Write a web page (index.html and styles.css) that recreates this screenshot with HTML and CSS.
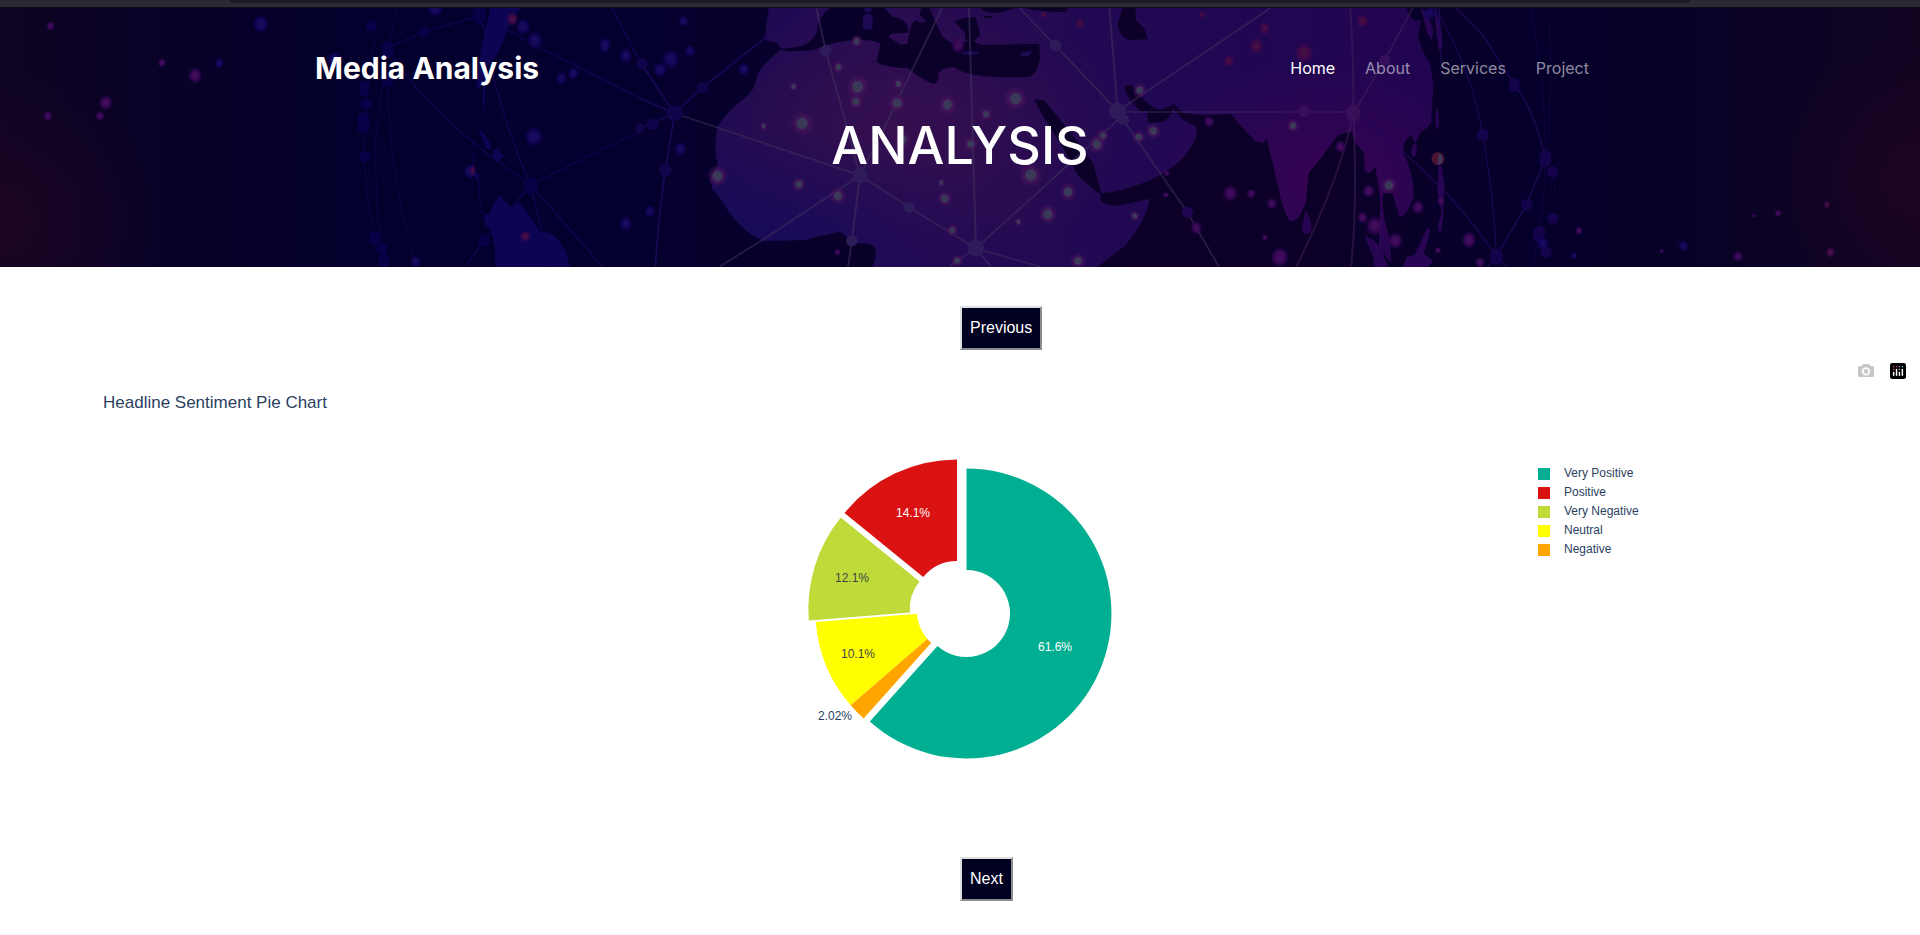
FILE: index.html
```html
<!DOCTYPE html>
<html lang="en">
<head>
<meta charset="utf-8">
<title>Media Analysis</title>
<link rel="stylesheet" href="styles.css">
</head>
<body>
<div class="topstrip"><div class="topstrip-field"></div></div>
<header class="hero">
  <svg class="hero-art" viewBox="0 8 1920 259" preserveAspectRatio="xMidYMid slice" aria-hidden="true">
    <defs>
      <linearGradient id="sky" x1="0" x2="1" y1="0" y2="0">
        <stop offset="0" stop-color="#0e0422"/><stop offset=".16" stop-color="#04002c"/><stop offset=".3" stop-color="#03002f"/>
        <stop offset=".5" stop-color="#0b0028"/><stop offset=".68" stop-color="#0d0028"/><stop offset=".8" stop-color="#04002b"/><stop offset="1" stop-color="#100421"/>
      </linearGradient>
      <linearGradient id="landfill" gradientUnits="userSpaceOnUse" x1="700" x2="1450" y1="0" y2="0">
        <stop offset="0" stop-color="#190a53"/><stop offset=".25" stop-color="#260b51"/><stop offset=".6" stop-color="#200853"/><stop offset="1" stop-color="#220450"/>
      </linearGradient>
      <radialGradient id="warm"><stop offset="0" stop-color="#38104e" stop-opacity=".85"/><stop offset="1" stop-color="#38104e" stop-opacity="0"/></radialGradient>
      <radialGradient id="cool"><stop offset="0" stop-color="#150a5c" stop-opacity=".7"/><stop offset="1" stop-color="#150a5c" stop-opacity="0"/></radialGradient>
      <radialGradient id="magenta"><stop offset="0" stop-color="#3a0353" stop-opacity=".85"/><stop offset="1" stop-color="#3a0353" stop-opacity="0"/></radialGradient>
      <radialGradient id="wine"><stop offset="0" stop-color="#200524" stop-opacity=".8"/><stop offset="1" stop-color="#200524" stop-opacity="0"/></radialGradient>
      <radialGradient id="g"><stop offset="0" stop-color="#3a3a58"/><stop offset=".4" stop-color="#3a3858"/><stop offset=".52" stop-color="#46145a" stop-opacity=".8"/><stop offset="1" stop-color="#46145a" stop-opacity="0"/></radialGradient>
      <radialGradient id="b"><stop offset="0" stop-color="#1c0a5e"/><stop offset=".45" stop-color="#16085a"/><stop offset="1" stop-color="#10016c" stop-opacity="0"/></radialGradient>
      <radialGradient id="p"><stop offset="0" stop-color="#431060"/><stop offset=".45" stop-color="#3b0856"/><stop offset="1" stop-color="#340460" stop-opacity="0"/></radialGradient>
      <radialGradient id="r"><stop offset="0" stop-color="#461540"/><stop offset=".45" stop-color="#400848"/><stop offset="1" stop-color="#400848" stop-opacity="0"/></radialGradient>
      <clipPath id="landclip">
        <path transform="translate(640) scale(.4082 .3333)" d="M316 20L306 110Q308 126 326 124Q340 132 345 146L368 144Q410 138 422 118Q436 100 434 85Q436 50 470 20ZM345 150Q375 158 425 150Q480 122 530 120Q575 118 589 132L579 186Q600 202 655 205Q680 230 717 252Q734 250 731 220Q745 200 770 202Q795 224 840 228Q900 234 950 232Q975 225 980 170L978 132L850 134Q830 140 815 118Q800 124 785 130Q770 142 740 108Q725 70 708 20L690 20L684 45L702 65Q685 72 678 60Q662 66 660 100L655 130L640 134L610 112L614 102L658 98Q660 60 620 50L596 20L830 20Q845 42 880 38L930 20Q980 38 1045 36L1050 20L1184 20L1170 70Q1175 120 1205 120L1245 118L1235 85L1215 60L1214 20L1568 20L1568 580L1535 415Q1528 440 1505 420L1470 375L1448 342L1380 346L1330 338L1308 313L1275 330Q1240 320 1215 265Q1200 248 1187 260Q1190 295 1228 335L1240 332L1246 368L1280 366Q1305 350 1305 322Q1325 365 1360 378Q1370 400 1355 430Q1320 510 1230 550Q1180 575 1130 580L1110 490L1050 390L990 300L966 298Q980 340 1030 430L1075 530L1128 584L1128 602Q1145 622 1180 616L1248 596Q1245 650 1190 735L1120 802L570 802Q590 740 560 730L530 730L490 695Q440 706 405 720L302 722Q240 690 200 600L178 570L172 540L190 495Q180 440 190 380Q215 330 260 292Q280 270 285 240Q290 200 345 150Z"/>
        <path transform="translate(1280) scale(.4082 .3333)" d="M-1 20L310 20Q312 50 330 60L345 62L338 110Q350 160 367 190L376 250L370 370Q362 385 345 395L332 430L320 405Q302 420 301 455Q330 530 327 590Q315 640 293 652Q285 615 275 580L253 580Q248 620 258 670Q272 720 272 790L242 740L246 600L234 500Q215 530 207 510L206 460L184 425L176 395Q142 400 135 415Q105 470 70 520L64 600Q48 665 28 664Q15 660 0 584Z"/>
      </clipPath>
    </defs>
    <rect y="8" width="1920" height="259" fill="url(#sky)"/>
    <ellipse cx="0" cy="220" rx="160" ry="150" fill="url(#wine)"/>
    <ellipse cx="1920" cy="180" rx="160" ry="150" fill="url(#wine)"/>
    <g clip-path="url(#landclip)">
      <rect y="8" width="1920" height="259" fill="url(#landfill)"/>
      <ellipse cx="900" cy="130" rx="230" ry="140" fill="url(#warm)"/>
      <ellipse cx="1320" cy="180" rx="180" ry="120" fill="url(#magenta)"/>
      <ellipse cx="790" cy="240" rx="220" ry="110" fill="url(#cool)"/>
    </g>

    <g transform="scale(.4082 .3333)">
      <path fill="#0d0454" d="M1202 20L1278 20Q1245 70 1234 120Q1215 180 1195 190Q1190 260 1185 342Q1178 300 1186 250L1166 270L1178 150ZM1170 380L1195 415L1205 446L1190 445ZM1205 460L1218 443L1236 468L1215 488ZM1162 412L1156 520L1170 540L1176 610L1190 675L1202 690L1212 740L1213 802L1396 802Q1380 710 1340 696L1325 698L1275 610L1250 620L1222 585L1196 645L1180 640L1172 520L1160 515Z"/>
      <g fill="none" stroke="#0e054e" stroke-width="4">
        <path d="M1498 20L1568 185M1172 48L1039 96L950 142Q1040 340 1300 555L1568 393M1195 62L1568 295M1182 70Q1220 340 1300 555L1350 802M1300 555L1478 802M1300 555L1186 722L1140 802"/>
        <path stroke-width="2" d="M975 20L950 145Q930 300 920 420Q920 640 935 740M950 250Q955 550 1018 785M920 120Q895 250 893 470Q895 600 920 714"/>
      </g>
      <g fill="#090148"><ellipse cx="910" cy="78" rx="14" ry="17"/><ellipse cx="1039" cy="96" rx="14" ry="17"/><ellipse cx="1174" cy="45" rx="17" ry="26"/><ellipse cx="950" cy="147" rx="15" ry="26"/><ellipse cx="950" cy="238" rx="15" ry="22"/><ellipse cx="892" cy="265" rx="13" ry="24"/><ellipse cx="896" cy="311" rx="14" ry="17"/><rect x="876" y="337" width="29" height="63" rx="14"/><ellipse cx="894" cy="470" rx="14" ry="17"/><ellipse cx="1300" cy="556" rx="17" ry="26"/><ellipse cx="918" cy="714" rx="15" ry="20"/><ellipse cx="935" cy="747" rx="14" ry="17"/><ellipse cx="940" cy="785" rx="14" ry="24"/><ellipse cx="1186" cy="722" rx="14" ry="17"/></g>
      <g fill="url(#p)"><ellipse cx="124" cy="78" rx="11" ry="15"/><ellipse cx="397" cy="188" rx="11" ry="15"/><ellipse cx="259" cy="308" rx="18" ry="24"/><ellipse cx="117" cy="348" rx="12" ry="16"/><ellipse cx="245" cy="348" rx="12" ry="16"/><ellipse cx="478" cy="227" rx="18" ry="25"/></g>
      <g fill="url(#b)"><ellipse cx="639" cy="72" rx="20" ry="28"/><ellipse cx="537" cy="189" rx="12" ry="17"/><ellipse cx="820" cy="180" rx="20" ry="25"/><ellipse cx="1066" cy="28" rx="20" ry="22"/><ellipse cx="1281" cy="80" rx="18" ry="25"/><ellipse cx="1311" cy="121" rx="20" ry="28"/><ellipse cx="1482" cy="136" rx="16" ry="24"/><ellipse cx="1533" cy="167" rx="16" ry="24"/><ellipse cx="1375" cy="235" rx="14" ry="20"/><ellipse cx="1405" cy="220" rx="14" ry="20"/><ellipse cx="1308" cy="410" rx="24" ry="30"/><ellipse cx="1533" cy="671" rx="16" ry="24"/><ellipse cx="1018" cy="785" rx="14" ry="18"/><ellipse cx="1152" cy="514" rx="16" ry="24"/></g>
      <g fill="url(#r)"><ellipse cx="1255" cy="57" rx="15" ry="22"/><ellipse cx="1287" cy="709" rx="14" ry="18"/><ellipse cx="1158" cy="512" rx="7" ry="18"/></g>
    </g>

    <g transform="translate(640) scale(.4082 .3333)">
      <g fill="#1d0952"><rect x="546" y="41" width="24" height="48" rx="11"/><ellipse cx="559" cy="28" rx="9" ry="9"/><ellipse cx="809" cy="159" rx="21" ry="6"/><path d="M929 162L958 150Q962 168 940 171Z"/></g>
      <path fill="#0b0028" d="M770 65L795 53L822 52L834 105L815 125L798 120L795 95ZM843 48L863 47L860 54L843 54Z"/>
      <g fill="none" stroke="#43345e" stroke-opacity=".5" stroke-width="5">
        <path d="M85 340L539 526L300 720L195 800M432 24L455 152L539 526L519 720L510 800M740 24L600 380L539 526L659 622L823 745L980 800M806 24L823 745L757 800M823 745L860 800M823 745L1184 345M930 24L1018 137L1170 333L1150 24M1170 333L1545 24M1170 336L1568 336M1184 360L1341 637L1418 800"/>
      </g>
      <path fill="none" stroke="#170a58" stroke-width="4" d="M398 24L153 263L85 340M0 185L85 340L62 510Q45 650 38 800M0 295L85 340L0 385"/>
      <g fill="#2e1c5a"><ellipse cx="455" cy="152" rx="14" ry="17"/><ellipse cx="539" cy="526" rx="18" ry="24"/><ellipse cx="659" cy="622" rx="14" ry="17"/><ellipse cx="823" cy="744" rx="20" ry="25"/><ellipse cx="519" cy="722" rx="14" ry="17"/><ellipse cx="1018" cy="137" rx="14" ry="17"/><ellipse cx="1170" cy="333" rx="21" ry="25"/><ellipse cx="1184" cy="359" rx="14" ry="17"/></g>
      <g fill="#12044a"><ellipse cx="85" cy="340" rx="20" ry="24"/><ellipse cx="153" cy="263" rx="14" ry="17"/><ellipse cx="5" cy="191" rx="14" ry="17"/><ellipse cx="31" cy="373" rx="14" ry="17"/><ellipse cx="0" cy="386" rx="10" ry="17"/><ellipse cx="62" cy="511" rx="15" ry="19"/><ellipse cx="1341" cy="637" rx="14" ry="17" fill="#1e0650"/></g>
      <g fill="url(#g)"><ellipse cx="531" cy="124" rx="15" ry="21"/><ellipse cx="486" cy="201" rx="14" ry="20"/><ellipse cx="533" cy="260" rx="29" ry="37"/><ellipse cx="529" cy="305" rx="20" ry="25"/><ellipse cx="376" cy="260" rx="11" ry="15"/><ellipse cx="633" cy="252" rx="14" ry="20"/><ellipse cx="630" cy="309" rx="24" ry="30"/><ellipse cx="753" cy="314" rx="24" ry="32"/><ellipse cx="920" cy="296" rx="30" ry="38"/><ellipse cx="848" cy="343" rx="16" ry="22"/><ellipse cx="397" cy="370" rx="30" ry="38"/><ellipse cx="303" cy="378" rx="10" ry="14"/><ellipse cx="643" cy="418" rx="22" ry="30"/><ellipse cx="190" cy="528" rx="26" ry="34"/><ellipse cx="389" cy="553" rx="18" ry="24"/><ellipse cx="485" cy="587" rx="22" ry="28"/><ellipse cx="738" cy="548" rx="10" ry="14"/><ellipse cx="747" cy="596" rx="20" ry="26"/><ellipse cx="810" cy="432" rx="20" ry="24"/><ellipse cx="957" cy="525" rx="30" ry="38"/><ellipse cx="1049" cy="576" rx="22" ry="30"/><ellipse cx="999" cy="643" rx="24" ry="32"/><ellipse cx="927" cy="665" rx="10" ry="14"/><ellipse cx="765" cy="691" rx="15" ry="20"/><ellipse cx="777" cy="782" rx="15" ry="20"/><ellipse cx="1073" cy="783" rx="20" ry="25"/><ellipse cx="1212" cy="648" rx="13" ry="17"/><ellipse cx="1134" cy="407" rx="16" ry="22"/><ellipse cx="1119" cy="433" rx="22" ry="30"/><ellipse cx="1222" cy="411" rx="18" ry="22"/><ellipse cx="1257" cy="393" rx="20" ry="26"/><ellipse cx="1224" cy="271" rx="18" ry="24"/></g>
      <g fill="url(#b)"><ellipse cx="106" cy="63" rx="13" ry="17"/><ellipse cx="122" cy="153" rx="14" ry="18"/><ellipse cx="75" cy="177" rx="22" ry="30"/><ellipse cx="49" cy="209" rx="18" ry="23"/><ellipse cx="254" cy="208" rx="15" ry="20"/><ellipse cx="99" cy="447" rx="16" ry="23"/><ellipse cx="24" cy="634" rx="14" ry="19"/></g>
      <g fill="url(#p)"><ellipse cx="484" cy="757" rx="8" ry="11"/><ellipse cx="779" cy="135" rx="18" ry="26"/><ellipse cx="1394" cy="365" rx="14" ry="18"/><ellipse cx="1290" cy="520" rx="8" ry="10"/><ellipse cx="1288" cy="585" rx="9" ry="9"/><ellipse cx="1446" cy="580" rx="20" ry="26"/><ellipse cx="1497" cy="581" rx="12" ry="16"/><ellipse cx="1548" cy="611" rx="14" ry="18"/><ellipse cx="1363" cy="684" rx="15" ry="21"/><ellipse cx="1531" cy="712" rx="8" ry="11"/><ellipse cx="1566" cy="771" rx="20" ry="28"/></g>
      <g fill="url(#r)"><ellipse cx="989" cy="44" rx="9" ry="12"/><ellipse cx="1078" cy="71" rx="12" ry="18"/><ellipse cx="1377" cy="44" rx="9" ry="12"/><ellipse cx="1442" cy="182" rx="14" ry="20"/><ellipse cx="1510" cy="138" rx="18" ry="26"/><ellipse cx="1530" cy="86" rx="14" ry="20"/></g>
    </g>

    <g transform="translate(1280) scale(.4082 .3333)">
      <path fill="#280552" d="M345 24L360 40L376 90L372 120L360 95ZM378 24Q400 80 398 140L390 155L384 110ZM384 320Q394 360 386 394Q376 360 384 320ZM330 430Q340 440 333 465L325 470Q316 450 330 430ZM62 630Q82 665 76 695Q60 712 54 690ZM207 708Q235 715 250 755L266 802L232 802L228 770ZM360 684L368 690Q362 725 352 760L376 785L360 802L300 802L310 772L330 765ZM388 490L396 500L403 555L400 650L393 706L386 680L396 640L386 570ZM380 610L366 650L377 620Z"/>
      <g fill="none" stroke="#43205c" stroke-opacity=".5" stroke-width="5"><path d="M172 24Q180 150 180 336H0M325 24L257 180L180 340Q145 540 40 800M180 340Q190 620 174 800"/></g>
      <g fill="none" stroke="#240a5c" stroke-opacity=".75" stroke-width="4"><path d="M180 340Q400 530 530 770L508 800M530 770L555 800M530 770L604 614L650 475Q620 320 574 255L500 110L430 24"/><path stroke-width="3" d="M380 24Q470 210 497 404Q525 600 530 770M390 24L395 190"/><path stroke-width="2" stroke-opacity=".5" d="M614 24Q650 240 650 475Q650 620 620 800M660 70Q665 260 655 475M668 515L675 582"/></g>
      <g fill="#14034b"><ellipse cx="574" cy="255" rx="14" ry="21"/><ellipse cx="497" cy="404" rx="15" ry="18"/><ellipse cx="650" cy="476" rx="15" ry="26"/><ellipse cx="668" cy="516" rx="14" ry="17"/><ellipse cx="604" cy="614" rx="14" ry="17"/><ellipse cx="669" cy="655" rx="14" ry="17"/><ellipse cx="636" cy="694" rx="14" ry="17"/><ellipse cx="633" cy="710" rx="14" ry="17"/><ellipse cx="652" cy="757" rx="14" ry="17"/><ellipse cx="530" cy="770" rx="16" ry="24"/></g>
      <g fill="#361059"><ellipse cx="59" cy="334" rx="14" ry="17"/><ellipse cx="180" cy="340" rx="17" ry="27"/><ellipse cx="257" cy="181" rx="14" ry="17"/></g>
      <ellipse cx="387" cy="476" rx="16" ry="19" fill="#4a1433"/><path fill="#3e3a5e" d="M390 459Q402 470 396 490L387 494Z"/>
      <g fill="url(#g)"><ellipse cx="32" cy="377" rx="16" ry="22"/><ellipse cx="267" cy="556" rx="22" ry="28"/></g>
      <g fill="url(#p)"><ellipse cx="148" cy="440" rx="14" ry="20"/><ellipse cx="217" cy="573" rx="16" ry="21"/><ellipse cx="202" cy="653" rx="14" ry="19"/><ellipse cx="232" cy="678" rx="24" ry="32"/><ellipse cx="282" cy="722" rx="20" ry="26"/><ellipse cx="338" cy="622" rx="16" ry="22"/><ellipse cx="394" cy="602" rx="10" ry="17"/><ellipse cx="463" cy="720" rx="19" ry="27"/><ellipse cx="490" cy="788" rx="13" ry="18"/><ellipse cx="387" cy="751" rx="9" ry="11"/><ellipse cx="0" cy="772" rx="22" ry="30"/><ellipse cx="732" cy="692" rx="10" ry="14"/><ellipse cx="1122" cy="769" rx="13" ry="17"/><ellipse cx="1161" cy="647" rx="5" ry="7"/><ellipse cx="935" cy="753" rx="6" ry="8"/><ellipse cx="1220" cy="640" rx="9" ry="12"/></g>
      <g fill="url(#r)"><ellipse cx="202" cy="63" rx="16" ry="22"/><ellipse cx="59" cy="159" rx="24" ry="32"/><ellipse cx="1340" cy="614" rx="9" ry="12"/><ellipse cx="1348" cy="757" rx="12" ry="17"/></g>
      <g fill="url(#b)"><ellipse cx="367" cy="40" rx="16" ry="22"/><ellipse cx="644" cy="730" rx="16" ry="21"/><ellipse cx="721" cy="767" rx="9" ry="12"/><ellipse cx="988" cy="738" rx="13" ry="17"/></g>
    </g>
  </svg>
  <div class="hero-content">
    <div class="bar">
      <a class="brand" href="#">Media Analysis</a>
      <nav class="nav">
        <a class="active" href="#">Home</a><a href="#">About</a><a href="#">Services</a><a href="#">Project</a>
      </nav>
    </div>
    <h1 class="hero-title">ANALYSIS</h1>
  </div>
</header>
<main class="page">
  <div class="pager"><button type="button">Previous</button></div>
  <section class="chart">
    <div class="modebar">
      <a href="#" aria-label="Download plot as a png"><svg width="16" height="16" viewBox="0 0 16 16"><path fill="#c6c6c6" fill-rule="evenodd" d="M5 1h6l1 2h2.500q1.500 0 1.500 1.500v8q0 1.500-1.500 1.500h-13Q0 14 0 12.500v-8Q0 3 1.500 3H4zM8 4.200a4.200 4.200 0 1 0 0 8.400a4.200 4.200 0 1 0 0-8.400M8 6a2.400 2.400 0 1 1 0 4.800a2.400 2.400 0 1 1 0-4.800"/></svg></a>
      <a href="#" aria-label="Produced with Plotly"><svg width="16" height="16" viewBox="0 0 132 132"><rect width="132" height="132" rx="18"/><g fill="#fff"><rect x="24" y="72" width="12" height="36" rx="6"/><rect x="48" y="48" width="12" height="60" rx="6"/><rect x="72" y="72" width="12" height="36" rx="6"/><rect x="96" y="48" width="12" height="60" rx="6"/></g><g fill="#ef4a8a"><circle cx="30" cy="30" r="6"/><circle cx="30" cy="54" r="6"/><circle cx="54" cy="30" r="6"/></g><circle cx="78" cy="30" r="6" fill="#c3a4e8"/><circle cx="78" cy="54" r="6" fill="#c3a4e8"/><circle cx="102" cy="30" r="6" fill="#6fd3f0"/></svg></a>
    </div>
    <h2 class="chart-title">Headline Sentiment Pie Chart</h2>
    <div class="plot">
      <svg class="pie" width="304" height="300" viewBox="808 458 304 300" role="img" aria-label="Headline sentiment shares">
        <path transform="translate(966.500 612.500)" fill="#00af91" d="M0-145A145 145 0 1 1-96.700 108.100L-29 32.400A43.500 43.500 0 1 0 0-43.500Z"/>
        <path transform="translate(957 603.500)" fill="#da1212" d="M0-145A145 145 0 0 0-112.500-91.400L-33.800-27.400A43.500 43.500 0 0 1 0-43.500Z"/>
        <path transform="translate(953.300 608)" fill="#bedb39" d="M-112.500-91.400A145 145 0 0 0-144.500 11.500L-43.400 3.400A43.500 43.500 0 0 1-33.800-27.400Z"/>
        <g transform="translate(960.300 609.400)">
          <path fill="#ff0" d="M-144.500 11.500A145 145 0 0 0-109.600 94.900L-32.900 28.500A43.500 43.500 0 0 1-43.400 3.400Z"/>
          <path fill="#ffa500" d="M-109.600 94.900A145 145 0 0 0-96.700 108.100L-29 32.400A43.500 43.500 0 0 1-32.900 28.500Z"/>
        </g>
        <g class="pct">
          <text class="light" x="1055" y="650">61.6%</text>
          <text class="light" x="913" y="516">14.1%</text>
          <text class="dark" x="852" y="581">12.1%</text>
          <text class="dark" x="858" y="657">10.1%</text>
          <text x="835" y="719">2.02%</text>
        </g>
      </svg>
      <ul class="legend">
        <li><i class="sw teal"></i>Very Positive</li>
        <li><i class="sw red"></i>Positive</li>
        <li><i class="sw lime"></i>Very Negative</li>
        <li><i class="sw yellow"></i>Neutral</li>
        <li><i class="sw orange"></i>Negative</li>
      </ul>
    </div>
  </section>
  <div class="pager"><button type="button">Next</button></div>
</main>
</body>
</html>
```
FILE: styles.css
```css
* { box-sizing: border-box; }
body { margin: 0; background: #fff; font-family: "Liberation Sans", Arial, sans-serif; }

.topstrip { height: 8px; background: #2b2a33; border-bottom: 1px solid #0c0c14; }
.topstrip-field { width: 76%; height: 3px; margin: 0 auto; background: #1c1b22; border-radius: 0 0 4px 4px; }

.hero { display: grid; height: 259px; overflow: hidden; background: #04002c; font-family: Inter, sans-serif; }
.hero-art, .hero-content { grid-area: 1 / 1; min-height: 0; }
.hero-art { width: 100%; height: 100%; }
.hero-content { z-index: 1; padding-top: 36px; }
.bar { display: flex; justify-content: space-between; align-items: center; max-width: 1290px; height: 48px; margin: 0 auto; }
.brand { font-size: 30px; font-weight: 700; line-height: 48px; color: #fff; text-decoration: none; }
.nav { display: flex; gap: 30px; padding-right: 16px; }
.nav a { font-size: 16px; line-height: 24px; color: rgba(255, 255, 255, .55); text-decoration: none; }
.nav .active { color: #fff; }
.hero-title { margin: 21px 0 0; text-align: center; font-size: 52px; font-weight: 500; line-height: 66px; color: #fff; }

.pager { padding-left: 50%; }
.pager button { display: block; height: 44px; padding: 0 8px; border: 2px outset #e0e0e0; background: #000020; color: #fff; font: 16px/24px "Liberation Sans", Arial, sans-serif; }
.page { padding-top: 39px; }

.chart { height: 507px; padding-top: 13px; color: #2a3f5f; }
.modebar { display: flex; justify-content: flex-end; gap: 16px; padding-right: 14px; }
.modebar svg { display: block; }
.chart-title { margin: 14px 0 0 103px; font-size: 17px; font-weight: 400; line-height: 20px; }
.plot { display: grid; grid-template-columns: 1fr 304px 1fr; margin-top: 46px; }
.pie { grid-column: 2; display: block; overflow: visible; }
.pct { font-size: 12px; text-anchor: middle; fill: #2a3f5f; }
.pct .light { fill: #fff; }
.pct .dark { fill: #444; }
.legend { justify-self: end; width: 102px; margin: 5px 280px 0 0; padding: 0; list-style: none; font-size: 12px; line-height: 19px; white-space: nowrap; }
.legend li { display: flex; align-items: center; gap: 14px; }
.sw { width: 12px; height: 12px; }
.teal { background: #00af91; }
.red { background: #da1212; }
.lime { background: #bedb39; }
.yellow { background: #ff0; }
.orange { background: #ffa500; }
```
